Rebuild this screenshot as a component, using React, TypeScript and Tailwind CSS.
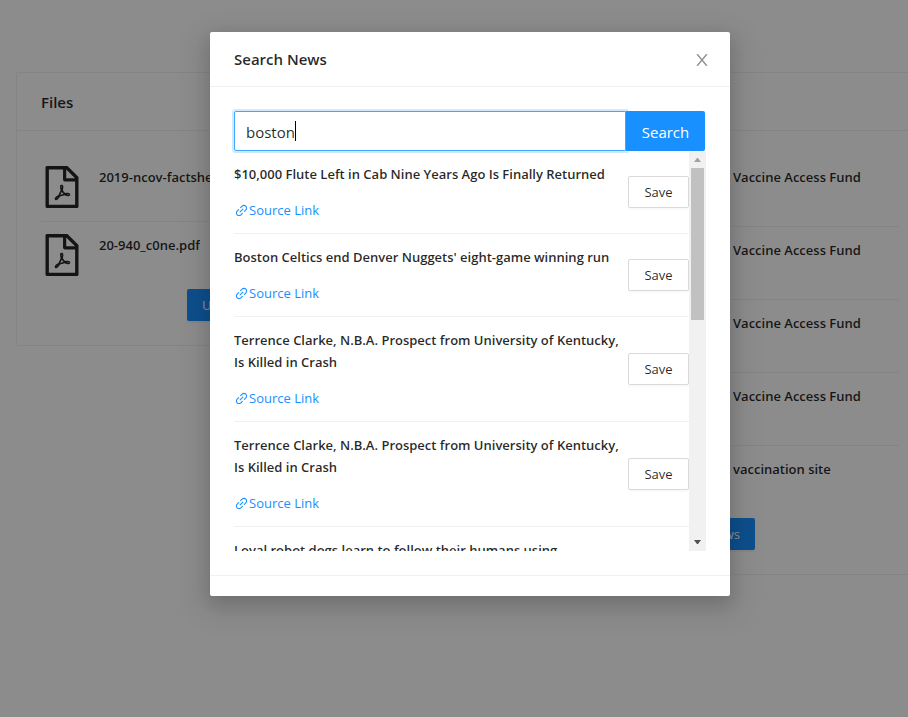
import { useState } from 'react';
import { AiOutlineFilePdf, AiOutlineLink } from 'react-icons/ai';

const files = ['2019-ncov-factsheet.pdf', '20-940_c0ne.pdf'];

const savedNews = [
  'Vaccine Access Fund',
  'Vaccine Access Fund',
  'Vaccine Access Fund',
  'Vaccine Access Fund',
  'vaccination site',
];

const results = [
  '$10,000 Flute Left in Cab Nine Years Ago Is Finally Returned',
  "Boston Celtics end Denver Nuggets' eight-game winning run",
  'Terrence Clarke, N.B.A. Prospect from University of Kentucky, Is Killed in Crash',
  'Terrence Clarke, N.B.A. Prospect from University of Kentucky, Is Killed in Crash',
  'Loyal robot dogs learn to follow their humans using smartphones',
];

function CloseIcon() {
  return (
    <svg viewBox="0 0 1024 1024" fill="currentColor" className="size-[18px]" aria-hidden>
      <path d="M563.8 512l262.5-312.9c4.4-5.2.7-13.1-6.1-13.1h-79.8c-4.7 0-9.2 2.1-12.3 5.7L511.6 449.8 295.1 191.7c-3-3.6-7.5-5.7-12.3-5.7H203c-6.8 0-10.5 7.9-6.1 13.1L459.4 512 196.9 824.9A7.95 7.95 0 0 0 203 838h79.8c4.7 0 9.2-2.1 12.3-5.7l216.5-258.1 216.5 258.1c3 3.6 7.5 5.7 12.3 5.7h79.8c6.8 0 10.5-7.9 6.1-13.1L563.8 512z" />
    </svg>
  );
}

function Card({ title, children }: { title: string; children: React.ReactNode }) {
  return (
    <section className="min-w-0 flex-1 rounded-xs border border-[#f0f0f0] bg-white">
      <h2 className="border-b border-[#f0f0f0] px-6 pt-[18px] pb-4 text-[15px] leading-[23px] font-semibold">
        {title}
      </h2>
      <div className="px-6 pt-[23px] pb-6">{children}</div>
    </section>
  );
}

function PrimaryButton({ children }: { children: React.ReactNode }) {
  return (
    <button type="button" className="h-8 rounded-xs bg-[#1890ff] px-[15px] text-[13px] text-white shadow-[0_2px_0_rgba(0,0,0,0.04)]">
      {children}
    </button>
  );
}

function FilesCard() {
  return (
    <Card title="Files">
      <ul className="divide-y divide-[#f0f0f0]">
        {files.map((name) => (
          <li key={name} className="flex gap-4 pt-3 pb-[13px]">
            <div className="flex size-[42px] shrink-0 items-center justify-center">
              <AiOutlineFilePdf className="size-12 shrink-0" aria-hidden />
            </div>
            <h3 className="truncate font-semibold">{name}</h3>
          </li>
        ))}
      </ul>
      <div className="flex justify-center">
        <PrimaryButton>Upload Files</PrimaryButton>
      </div>
    </Card>
  );
}

function NewsCard() {
  return (
    <Card title="News">
      <ul className="divide-y divide-[#f0f0f0]">
        {savedNews.map((title, i) => (
          <li key={i} className="flex h-[73px] py-3 pl-[230px] last:h-[72px]">
            <h3 className="truncate font-semibold">{title}</h3>
          </li>
        ))}
      </ul>
      <div className="flex justify-center">
        <PrimaryButton>Search News</PrimaryButton>
      </div>
    </Card>
  );
}

function ScrollTrack() {
  return (
    <div className="flex w-[17px] shrink-0 flex-col items-center bg-[#f1f1f1]" aria-hidden>
      <svg className="size-[17px] shrink-0" viewBox="0 0 17 17">
        <path d="M8 7h1l3 4H5z" fill="#a3a3a3" />
      </svg>
      <div className="h-[152px] w-[13px] bg-[#c1c1c1]" />
      <svg className="mt-auto size-[17px] shrink-0" viewBox="0 0 17 17">
        <path d="M5 6h7l-3 4H8z" fill="#505050" />
      </svg>
    </div>
  );
}

function SearchDialog() {
  const [query, setQuery] = useState('boston');
  return (
    <div
      role="dialog"
      aria-labelledby="dialog-title"
      className="w-[520px] rounded-xs bg-white shadow-[0_6px_16px_rgba(0,0,0,0.12),0_9px_28px_8px_rgba(0,0,0,0.1)]"
    >
      <header className="flex items-center justify-between border-b border-[#f0f0f0] px-6 py-4">
        <h2 id="dialog-title" className="text-[15px] font-semibold">
          Search News
        </h2>
        <button type="button" aria-label="Close" className="-mr-[5px] pt-[2px] text-black/45">
          <CloseIcon />
        </button>
      </header>
      <div className="p-6">
        <form className="flex pr-px text-[15px]" onSubmit={(e) => e.preventDefault()}>
          <div className="relative flex-1">
            <input
              type="text"
              aria-label="Search news"
              value={query}
              onChange={(e) => setQuery(e.target.value)}
              className="h-10 w-full rounded-l-xs border border-[#40a9ff] px-[11px] pt-[2px] caret-transparent shadow-[0_0_0_2px_rgba(24,144,255,0.2)] outline-none"
            />
            <span className="pointer-events-none absolute top-0 left-0 flex h-10 items-center px-3" aria-hidden>
              <span className="invisible">{query}</span>
              <span className="h-5 w-px bg-black" />
            </span>
          </div>
          <button type="submit" className="relative h-10 w-[79px] rounded-r-xs bg-[#1890ff] pt-[2px] text-white">
            Search
          </button>
        </form>
        <div className="flex h-[400px] overflow-hidden">
          <ul className="min-w-0 flex-1 divide-y divide-[#f0f0f0]">
            {results.map((title, i) => (
              <li key={i} className="flex items-center gap-2 py-3">
                <div className="min-w-0 flex-1">
                  <h3 className="mb-[14px] font-semibold">{title}</h3>
                  <a href="#source" className="flex items-center text-[#1890ff]">
                    <AiOutlineLink className="size-[15px]" aria-hidden />
                    Source Link
                  </a>
                </div>
                <button
                  type="button"
                  className="h-8 w-[61px] shrink-0 rounded-xs border border-[#d9d9d9] bg-white shadow-[0_2px_0_rgba(0,0,0,0.02)]"
                >
                  Save
                </button>
              </li>
            ))}
          </ul>
          <ScrollTrack />
        </div>
      </div>
      <footer className="h-[21px] border-t border-[#f0f0f0]" />
    </div>
  );
}

export default function App() {
  return (
    <div className="relative min-h-screen overflow-hidden bg-white font-['Open_Sans','Noto_Sans',sans-serif] text-[13px] leading-[22px] text-black/85">
      <main className="-mr-8 flex items-start gap-4 px-4 pt-[72px]">
        <FilesCard />
        <NewsCard />
      </main>
      <div className="absolute inset-y-0 left-0 -right-8 flex items-start justify-center bg-black/45 pt-8">
        <SearchDialog />
      </div>
    </div>
  );
}
